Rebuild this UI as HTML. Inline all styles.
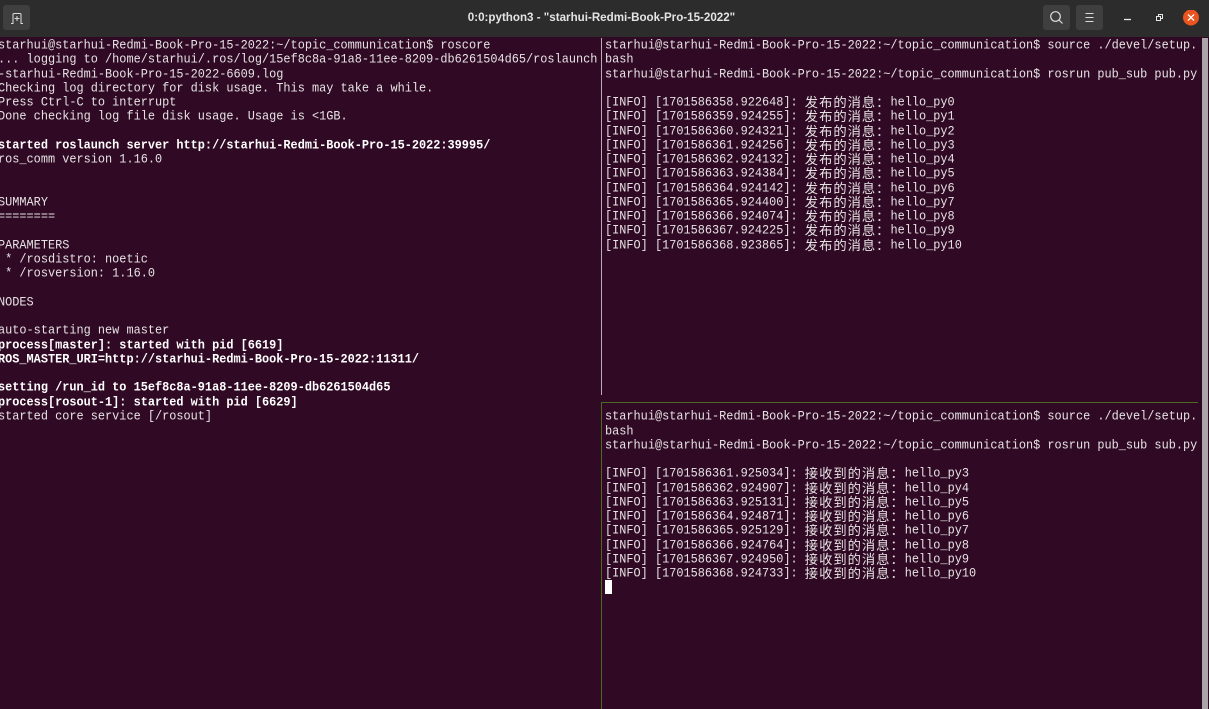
<!DOCTYPE html>
<html>
<head>
<meta charset="utf-8">
<style>
html,body{margin:0;padding:0;width:1209px;height:709px;overflow:hidden;background:#300a24}
#wrap{position:absolute;left:0;top:0;width:1209px;height:709px;overflow:hidden;background:#300a24}
#bar{position:absolute;left:0;top:0;width:1209px;height:37px;background:#2c2c2c}
#title{position:absolute;left:0;top:0;width:1203px;height:35px;text-align:center;color:#e4e4e4;font:bold 11.6px/35px "Liberation Sans",sans-serif}
.btn{position:absolute;top:5px;width:27px;height:25px;background:#3f3f3f;border-radius:3px}
.t{position:absolute;margin:0;font:11.9px "Liberation Mono",monospace;color:#e6e2e4;white-space:normal;width:700px}
.t div{height:14.28px;line-height:14.28px;white-space:pre;transform:scaleY(1.1);transform-origin:50% 50%}
.t b{color:#fff;font-weight:bold}
.c{display:inline-block;height:14px;vertical-align:top;font:13.3px/14px "Noto Sans CJK SC","WenQuanYi Zen Hei",sans-serif;letter-spacing:.98px;transform:scaleY(.91)}
.l{position:absolute}
svg{position:absolute}
</style>
</head>
<body>
<div id="wrap">
<div id="bar"></div>
<div class="btn" style="left:3px"></div>
<svg style="left:3px;top:5px" width="27" height="25" fill="none" stroke="#dcdcdc" stroke-width="1"><path d="M8 18.500h2V9.500q0-1 1-1h6q1 0 1 1v9h2M14 11v5M11.500 13.500h5"/></svg>
<div id="title">0:0:python3 - "starhui-Redmi-Book-Pro-15-2022"</div>
<div class="btn" style="left:1043px"></div>
<svg style="left:1043px;top:5px" width="27" height="25" fill="none" stroke="#dcdcdc" stroke-width="1.200"><circle cx="12.500" cy="11.500" r="4.800"/><path d="M16 15l3.500 3.500"/></svg>
<div class="btn" style="left:1076px"></div>
<svg style="left:1076px;top:5px" width="27" height="25" fill="none" stroke="#dcdcdc" stroke-width="1"><path d="M9.500 8.500h8M9.500 12.500h8M9.500 16.500h8"/></svg>
<svg style="left:1120px;top:10px" width="89" height="20" fill="none" stroke="#e8e8e8" stroke-width="1">
<path d="M4 9.500h7" stroke-width="1.300"/>
<path d="M36.500 6.500h4v4h-4zM38.500 6V4.500h4v4H41"/>
<circle cx="71" cy="7.500" r="8" fill="#e95420" stroke="none"/>
<path d="M68 4.500l6 6M74 4.500l-6 6" stroke="#fff" stroke-width="1.300"/>
</svg>

<div class="t" style="left:-2px;top:38px">
<div>starhui@starhui-Redmi-Book-Pro-15-2022:~/topic_communication$ roscore</div>
<div>... logging to /home/starhui/.ros/log/15ef8c8a-91a8-11ee-8209-db6261504d65/roslaunch</div>
<div>-starhui-Redmi-Book-Pro-15-2022-6609.log</div>
<div>Checking log directory for disk usage. This may take a while.</div>
<div>Press Ctrl-C to interrupt</div>
<div>Done checking log file disk usage. Usage is &lt;1GB.</div>
<div> </div>
<div><b>started roslaunch server http://starhui-Redmi-Book-Pro-15-2022:39995/</b></div>
<div>ros_comm version 1.16.0</div>
<div> </div>
<div> </div>
<div>SUMMARY</div>
<div>========</div>
<div> </div>
<div>PARAMETERS</div>
<div> * /rosdistro: noetic</div>
<div> * /rosversion: 1.16.0</div>
<div> </div>
<div>NODES</div>
<div> </div>
<div>auto-starting new master</div>
<div><b>process[master]: started with pid [6619]</b></div>
<div><b>ROS_MASTER_URI=http://starhui-Redmi-Book-Pro-15-2022:11311/</b></div>
<div> </div>
<div><b>setting /run_id to 15ef8c8a-91a8-11ee-8209-db6261504d65</b></div>
<div><b>process[rosout-1]: started with pid [6629]</b></div>
<div>started core service [/rosout]</div>
</div>

<div class="t" style="left:605px;top:38px">
<div>starhui@starhui-Redmi-Book-Pro-15-2022:~/topic_communication$ source ./devel/setup.</div>
<div>bash</div>
<div>starhui@starhui-Redmi-Book-Pro-15-2022:~/topic_communication$ rosrun pub_sub pub.py</div>
<div> </div>
<div>[INFO] [1701586358.922648]: <span class="c">发布的消息：</span>hello_py0</div>
<div>[INFO] [1701586359.924255]: <span class="c">发布的消息：</span>hello_py1</div>
<div>[INFO] [1701586360.924321]: <span class="c">发布的消息：</span>hello_py2</div>
<div>[INFO] [1701586361.924256]: <span class="c">发布的消息：</span>hello_py3</div>
<div>[INFO] [1701586362.924132]: <span class="c">发布的消息：</span>hello_py4</div>
<div>[INFO] [1701586363.924384]: <span class="c">发布的消息：</span>hello_py5</div>
<div>[INFO] [1701586364.924142]: <span class="c">发布的消息：</span>hello_py6</div>
<div>[INFO] [1701586365.924400]: <span class="c">发布的消息：</span>hello_py7</div>
<div>[INFO] [1701586366.924074]: <span class="c">发布的消息：</span>hello_py8</div>
<div>[INFO] [1701586367.924225]: <span class="c">发布的消息：</span>hello_py9</div>
<div>[INFO] [1701586368.923865]: <span class="c">发布的消息：</span>hello_py10</div>
</div>

<div class="t" style="left:605px;top:409.300px">
<div>starhui@starhui-Redmi-Book-Pro-15-2022:~/topic_communication$ source ./devel/setup.</div>
<div>bash</div>
<div>starhui@starhui-Redmi-Book-Pro-15-2022:~/topic_communication$ rosrun pub_sub sub.py</div>
<div> </div>
<div>[INFO] [1701586361.925034]: <span class="c">接收到的消息：</span>hello_py3</div>
<div>[INFO] [1701586362.924907]: <span class="c">接收到的消息：</span>hello_py4</div>
<div>[INFO] [1701586363.925131]: <span class="c">接收到的消息：</span>hello_py5</div>
<div>[INFO] [1701586364.924871]: <span class="c">接收到的消息：</span>hello_py6</div>
<div>[INFO] [1701586365.925129]: <span class="c">接收到的消息：</span>hello_py7</div>
<div>[INFO] [1701586366.924764]: <span class="c">接收到的消息：</span>hello_py8</div>
<div>[INFO] [1701586367.924950]: <span class="c">接收到的消息：</span>hello_py9</div>
<div>[INFO] [1701586368.924733]: <span class="c">接收到的消息：</span>hello_py10</div>
</div>

<div class="l" style="left:605px;top:580px;width:7px;height:14px;background:#fff"></div>
<div class="l" style="left:601px;top:38px;width:1px;height:357px;background:#b9aeb5"></div>
<div class="l" style="left:601px;top:402px;width:1px;height:307px;background:#4e6a1e"></div>
<div class="l" style="left:601px;top:401.500px;width:597px;height:1.500px;background:#4e6a1e"></div>
<div class="l" style="left:1202px;top:38px;width:6px;height:671px;background:#a9a5a8"></div>
</div>
</body>
</html>
